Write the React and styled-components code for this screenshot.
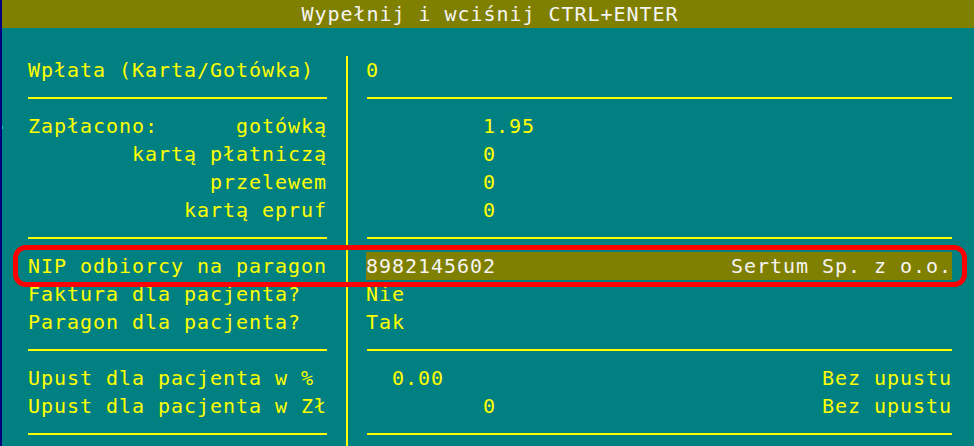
import React from "react";
import styled, { createGlobalStyle } from "styled-components";

const GlobalStyle = createGlobalStyle`
  html, body { margin: 0; padding: 0; background: #008080; }
  body { overflow: hidden; }
`;

const Screen = styled.div`
  position: relative;
  width: 974px;
  height: 446px;
  box-sizing: border-box;
  border-left: 2px solid #000080;
  background: #008080;
  display: flex;
  flex-direction: column;
  overflow: hidden;
  font-family: "DejaVu Sans Mono", "Liberation Mono", monospace;
  font-size: 20px;
  letter-spacing: 0.96px;
  line-height: 28px;
  color: #ffff00;
  white-space: pre;
`;

const Header = styled.div`
  height: 28px;
  flex: none;
  background: #808000;
  color: #f4f4f4;
  text-align: center;
  padding-left: 4px;
  line-height: 29px;
`;

const Body = styled.div`
  flex: 1;
  display: flex;
  margin-top: 28px;
`;

const Column = styled.div`
  flex: none;
  display: flex;
  flex-direction: column;
  width: ${(p) => p.$width}px;
  margin-left: ${(p) => p.$offset}px;
`;

const Divider = styled.div`
  flex: none;
  width: 2px;
  margin-left: 19px;
  background: #ffff00;
`;

const Row = styled.div`
  height: 28px;
  display: flex;
  justify-content: ${(p) => p.$justify || "space-between"};
  padding-left: ${(p) => p.$indent || 0}px;
  background: ${(p) => (p.$selected ? "#808000" : "transparent")};
  color: ${(p) => (p.$selected ? "#f4f4f4" : "#ffff00")};
`;

const Rule = styled.div`
  height: 2px;
  margin: 13px 0 13px ${(p) => p.$inset || 0}px;
  background: #ffff00;
`;

const Value = styled.span`
  padding-left: ${(p) => p.$indent || 0}px;
`;

const Highlight = styled.div`
  position: absolute;
  left: 11px;
  top: 245px;
  width: 954px;
  height: 42px;
  box-sizing: border-box;
  border: 5px solid #ff0000;
  border-radius: 13px;
  pointer-events: none;
`;

const CursorMark = styled.div`
  position: absolute;
  left: -2px;
  top: 126px;
  width: 3px;
  height: 3px;
  background: #10c8c8;
`;

export default function App() {
  return (
    <>
      <GlobalStyle />
      <Screen>
        <Header>Wypełnij i wciśnij CTRL+ENTER</Header>
        <Body>
          <Column $width={299} $offset={26}>
            <Row>Wpłata (Karta/Gotówka)</Row>
            <Rule />
            <Row>
              <span>Zapłacono:</span>
              <span>gotówką</span>
            </Row>
            <Row $justify="flex-end">kartą płatniczą</Row>
            <Row $justify="flex-end">przelewem</Row>
            <Row $justify="flex-end">kartą epruf</Row>
            <Rule />
            <Row>NIP odbiorcy na paragon</Row>
            <Row>Faktura dla pacjenta?</Row>
            <Row>Paragon dla pacjenta?</Row>
            <Rule />
            <Row>Upust dla pacjenta w %</Row>
            <Row>Upust dla pacjenta w Zł</Row>
            <Rule />
          </Column>
          <Divider />
          <Column $width={586} $offset={18}>
            <Row $justify="flex-start">0</Row>
            <Rule $inset={1} />
            <Row $justify="flex-start" $indent={117}>1.95</Row>
            <Row $justify="flex-start" $indent={117}>0</Row>
            <Row $justify="flex-start" $indent={117}>0</Row>
            <Row $justify="flex-start" $indent={117}>0</Row>
            <Rule $inset={1} />
            <Row $selected>
              <span>8982145602</span>
              <span>Sertum Sp. z o.o.</span>
            </Row>
            <Row $justify="flex-start">Nie</Row>
            <Row $justify="flex-start">Tak</Row>
            <Rule $inset={1} />
            <Row>
              <Value $indent={26}>0.00</Value>
              <span>Bez upustu</span>
            </Row>
            <Row>
              <Value $indent={117}>0</Value>
              <span>Bez upustu</span>
            </Row>
            <Rule $inset={1} />
          </Column>
        </Body>
        <Highlight />
        <CursorMark />
      </Screen>
    </>
  );
}
